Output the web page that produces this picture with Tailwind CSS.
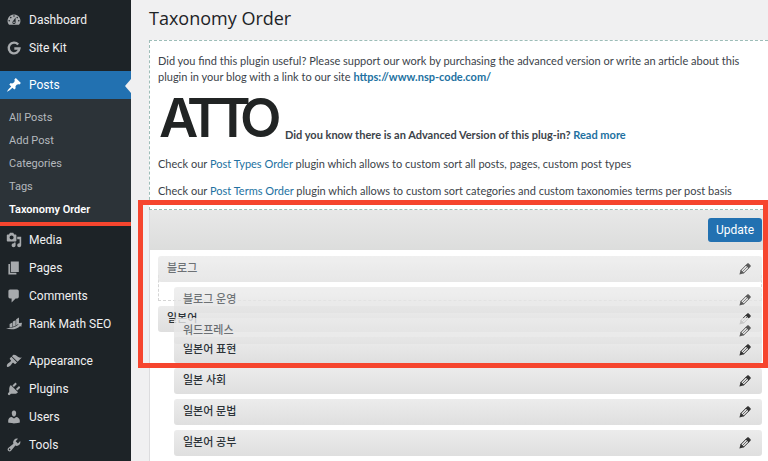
<!DOCTYPE html>
<html lang="en">
<head>
    <meta charset="UTF-8">
    <meta name="viewport" content="width=device-width, initial-scale=1.0">
    <title>Taxonomy Order</title>
    <script src="https://cdn.jsdelivr.net/npm/@tailwindcss/browser@4"></script>
</head>
<body class="flex min-h-screen overflow-x-hidden bg-[#f0f0f1] font-['Roboto','Noto_Sans_CJK_KR',sans-serif] text-[#3c434a]">

    <!-- Admin menu -->
    <nav aria-label="Main menu" class="relative w-[131px] shrink-0 bg-[#1d2327] pt-1.5 text-xs text-[#f0f0f1]">
        <a href="#" class="flex h-7 items-center gap-[7px] pl-1.5">
            <svg class="size-4 fill-[#a7aaad]" viewBox="0 0 20 20" aria-hidden="true"><path d="M3.76 16h12.48A7.998 7.998 0 0 0 10 3a7.998 7.998 0 0 0-6.24 13zM10 4c.55 0 1 .45 1 1s-.45 1-1 1-1-.45-1-1 .45-1 1-1zM6 6c.55 0 1 .45 1 1s-.45 1-1 1-1-.45-1-1 .45-1 1-1zm8 0c.55 0 1 .45 1 1s-.45 1-1 1-1-.45-1-1 .45-1 1-1zm-5.37 5.55L12 7v6c0 1.1-.9 2-2 2s-2-.9-2-2c0-.57.24-1.08.63-1.45zM4 10c.55 0 1 .45 1 1s-.45 1-1 1-1-.45-1-1 .45-1 1-1zm12 0c.55 0 1 .45 1 1s-.45 1-1 1-1-.45-1-1 .45-1 1-1zm-5 3c0-.55-.45-1-1-1s-1 .45-1 1 .45 1 1 1 1-.45 1-1z"/></svg>
            Dashboard
        </a>
        <a href="#" class="flex h-7 items-center gap-[7px] pl-1.5">
            <svg class="size-4" viewBox="0 0 20 20" fill="none" stroke="#a7aaad" stroke-width="3" aria-hidden="true"><path d="M15.2 5.6A6.7 6.7 0 1 0 16.8 10.6H10.4"/></svg>
            Site Kit
        </a>
        <a href="#" aria-current="true" class="relative mt-[9px] flex h-7 items-center gap-[7px] bg-[#2271b1] pl-1.5 text-white">
            <svg class="size-4 fill-white" viewBox="0 0 20 20" aria-hidden="true"><path d="M10.44 3.02l1.82-1.82 6.36 6.35-1.83 1.82c-1.05-.68-2.48-.57-3.41.36l-.75.75c-.92.93-1.04 2.35-.35 3.41l-1.83 1.82-2.41-2.41-2.8 2.79c-.42.42-3.38 2.71-3.8 2.29s1.86-3.39 2.28-3.81l2.79-2.79L4.1 9.36l1.83-1.82c1.05.69 2.48.57 3.4-.36l.75-.75c.93-.92 1.05-2.35.36-3.41z"/></svg>
            Posts
            <svg class="absolute top-2 right-0 h-3.5 w-1.5 fill-[#f0f0f1]" viewBox="0 0 6 14" aria-hidden="true"><path d="M6 0v14L0 7z"/></svg>
        </a>
        <div class="relative bg-[#2c3338] pt-[7px] pb-[5px] pl-[9px] text-[11px] leading-[23px] text-[#b4b9be]">
            <a href="#" class="block">All Posts</a>
            <a href="#" class="block">Add Post</a>
            <a href="#" class="block">Categories</a>
            <a href="#" class="block">Tags</a>
            <a href="#" aria-current="page" class="block font-semibold text-white">Taxonomy Order</a>
            <span class="absolute inset-x-0 bottom-0 h-1 bg-[#f6452e]"></span>
        </div>
        <a href="#" class="flex h-7 items-center gap-[7px] pl-1.5">
            <svg class="size-4 fill-[#a7aaad]" viewBox="0 0 20 20" aria-hidden="true"><path d="M13 11V4c0-.55-.45-1-1-1h-1.67L9 1H5L3.67 3H2c-.55 0-1 .45-1 1v7c0 .55.45 1 1 1h10c.55 0 1-.45 1-1zM7 4.5c1.38 0 2.5 1.12 2.5 2.5S8.38 9.5 7 9.5 4.5 8.38 4.5 7 5.62 4.5 7 4.5zM14 6h5v10.5c0 1.38-1.12 2.5-2.5 2.5S14 17.88 14 16.5s1.12-2.5 2.5-2.5c.17 0 .34.02.5.05V9h-3V6zm-4 8.05V13h2v3.5c0 1.38-1.12 2.5-2.5 2.5S7 17.88 7 16.5 8.12 14 9.5 14c.17 0 .34.02.5.05z"/></svg>
            Media
        </a>
        <a href="#" class="flex h-7 items-center gap-[7px] pl-1.5">
            <svg class="size-4 fill-[#a7aaad]" viewBox="0 0 20 20" aria-hidden="true"><path d="M6 15V2h10v13H6zm-1 1h8v2H3V5h2v11z"/></svg>
            Pages
        </a>
        <a href="#" class="flex h-7 items-center gap-[7px] pl-1.5">
            <svg class="size-4 fill-[#a7aaad]" viewBox="0 0 20 20" aria-hidden="true"><path d="M5 2h9c1.1 0 2 .9 2 2v7c0 1.1-.9 2-2 2h-2l-5 5v-5H5c-1.1 0-2-.9-2-2V4c0-1.1.9-2 2-2z"/></svg>
            Comments
        </a>
        <a href="#" class="flex h-7 items-center gap-[7px] pl-1.5">
            <svg class="size-4 fill-[#a7aaad]" viewBox="0 0 20 20" aria-hidden="true"><path d="M4.500 10l3.500-1.800v5.600l-3.500.8zM8.600 7l3.500-1.800v7L8.600 13.500zM12.700 4l3.500-2v7.500l-3.500 2.300zM0 15c5 .5 11-.6 15.600-4.500L14.300 9.200l5.700-.9-1 5.300-1.300-1.200C13.500 16.700 6 18 0 15z"/></svg>
            Rank Math SEO
        </a>
        <a href="#" class="mt-[9px] flex h-7 items-center gap-[7px] pl-1.5">
            <svg class="size-4 fill-[#a7aaad]" viewBox="0 0 20 20" aria-hidden="true"><path d="M14.48 11.06L7.41 3.99l1.5-1.5c.5-.56 2.3-.47 3.51.32 1.21.8 1.43 1.28 2.91 2.1 1.18.64 2.45 1.26 4.45.85zm-.71.71L6.7 4.7 4.93 6.47c-.39.39-.39 1.02 0 1.41l1.06 1.06c.39.39.39 1.03 0 1.42-.6.6-1.43 1.11-2.21 1.69-.35.26-.7.53-1.01.84C1.43 14.23.4 16.08 1.4 17.07c.99 1 2.84-.03 4.18-1.36.31-.31.58-.66.85-1.02.57-.78 1.08-1.61 1.69-2.21.39-.39 1.02-.39 1.41 0l1.06 1.06c.39.39 1.02.39 1.41 0z"/></svg>
            Appearance
        </a>
        <a href="#" class="flex h-7 items-center gap-[7px] pl-1.5">
            <svg class="size-4 fill-[#a7aaad]" viewBox="0 0 20 20" aria-hidden="true"><path d="M13.11 4.36L9.87 7.6 8 5.73l3.24-3.24c.35-.34 1.05-.2 1.56.32.52.51.66 1.21.31 1.55zm-8 1.77l.91-1.12 9.01 9.01-1.19.84c-.71.71-2.63 1.16-3.82 1.16H6.14L4.9 17.26c-.59.59-1.54.59-2.12 0-.59-.58-.59-1.53 0-2.12l1.24-1.24v-3.88c0-1.13.4-3.19 1.09-3.89zm7.26 3.97l3.24-3.24c.34-.35 1.04-.21 1.55.31.52.51.66 1.21.31 1.55l-3.24 3.25z"/></svg>
            Plugins
        </a>
        <a href="#" class="flex h-7 items-center gap-[7px] pl-1.5">
            <svg class="size-4 fill-[#a7aaad]" viewBox="0 0 20 20" aria-hidden="true"><path d="M10 9.25c-2.27 0-2.73-3.44-2.73-3.44C7 4.02 7.82 2 9.97 2c2.16 0 2.98 2.02 2.71 3.81 0 0-.41 3.44-2.68 3.44zm0 2.57L12.72 10c2.39 0 4.52 2.33 4.52 4.53v2.49s-3.65 1.13-7.24 1.13c-3.65 0-7.24-1.13-7.24-1.13v-2.49c0-2.25 1.94-4.48 4.47-4.48z"/></svg>
            Users
        </a>
        <a href="#" class="flex h-7 items-center gap-[7px] pl-1.5">
            <svg class="size-4 fill-[#a7aaad]" viewBox="0 0 20 20" aria-hidden="true"><path d="M16.68 9.77c-1.34 1.34-3.3 1.67-4.95.99l-5.41 6.52c-.99.99-2.59.99-3.58 0s-.99-2.59 0-3.57l6.52-5.42c-.68-1.65-.35-3.61.99-4.95 1.28-1.28 3.12-1.62 4.72-1.06l-2.89 2.89 2.82 2.82 2.86-2.87c.53 1.58.18 3.39-1.08 4.65zM3.81 16.21c.4.39 1.04.39 1.43 0 .4-.4.4-1.04 0-1.43-.39-.4-1.03-.4-1.43 0-.39.39-.39 1.03 0 1.43z"/></svg>
            Tools
        </a>
    </nav>

    <!-- Shared pencil icon -->
    <svg class="hidden" aria-hidden="true">
        <symbol id="pencil" viewBox="0 0 12 12">
            <path d="M2 7.300L7.200 2 10 4.800 4.700 10z" fill="#e4e4e4" stroke="#333" stroke-width="1"/>
            <path d="M3.600 8.400L8.500 3.500" stroke="#666" stroke-width="1" fill="none"/>
            <path d="M6.500 2.300L8.300.5c.4-.4 1-.4 1.400 0l1.800 1.800c.4.4.4 1 0 1.400L9.700 5.500zM1.700 6.800L.4 11.600 5.200 10.300z" fill="#333"/>
        </symbol>
    </svg>

    <main class="flex min-w-0 flex-1 flex-col pl-[18px]">
        <h1 class="pt-1.5 pb-2.5 font-['Open_Sans',sans-serif] text-lg leading-6 text-[#1d2327]">Taxonomy Order</h1>

        <section class="flex flex-col gap-[11px] border-y border-l border-dashed border-[#9dbdb8] bg-white pt-3 pr-6 pb-2.5 pl-2 font-['Lato',sans-serif] text-[11px] leading-4">
            <p>Did you find this plugin useful? Please support our work by purchasing the advanced version or write an article about this plugin in your blog with a link to our site <a href="#" class="font-bold text-[#2271a1]">https://www.nsp-code.com/</a></p>
            <div class="flex items-end gap-1 pb-0.5 font-bold">
                <svg class="-mt-4 -mb-2 h-[71px] w-[123px] font-['Inter',sans-serif] font-semibold" viewBox="0 -16 123 71" fill="#212424" font-size="54" role="img" aria-label="ATTO">
                    <text x="1 29 57 82" y="41">ATTO</text>
                </svg>
                <p>Did you know there is an Advanced Version of this plug-in? <a href="#" class="text-[#2271a1]">Read more</a></p>
            </div>
            <p>Check our <a href="#" class="text-[#2271a1]">Post Types Order</a> plugin which allows to custom sort all posts, pages, custom post types</p>
            <p>Check our <a href="#" class="text-[#2271a1]">Post Terms Order</a> plugin which allows to custom sort categories and custom taxonomies terms per post basis</p>
        </section>

        <section class="relative flex-1 border-l border-[#dcdcde] bg-white">
            <div class="flex h-10 items-center justify-end bg-linear-to-b from-[#e8e8e8] to-[#dcdddc] pr-1.5">
                <button type="button" class="h-6 rounded-[3px] bg-[#2271b1] px-2 text-xs text-white">Update</button>
            </div>

            <div class="relative pt-[25px] pr-1.5 pl-2 text-[11px] font-medium text-[#2c3338]">
                <!-- Drop target left behind by the dragged term -->
                <div class="mb-[5px] h-[26px] border border-t-0 border-dashed border-[#d5d5d5]"></div>

                <ul class="flex flex-col gap-[5px]">
                    <li class="flex h-[26px] items-center justify-between rounded-[3px] bg-linear-to-b from-[#ececec] to-[#dfdfdf] pr-[11px] pl-[9px]">
                        일본어
                        <button type="button" aria-label="Edit 일본어"><svg class="size-3"><use href="#pencil"/></svg></button>
                    </li>
                    <li class="ml-4 flex h-[26px] items-center justify-between rounded-[3px] bg-linear-to-b from-[#ececec] to-[#dfdfdf] pr-[11px] pl-[9px]">
                        일본어 표현
                        <button type="button" aria-label="Edit 일본어 표현"><svg class="size-3"><use href="#pencil"/></svg></button>
                    </li>
                    <li class="ml-4 flex h-[26px] items-center justify-between rounded-[3px] bg-linear-to-b from-[#ececec] to-[#dfdfdf] pr-[11px] pl-[9px]">
                        일본 사회
                        <button type="button" aria-label="Edit 일본 사회"><svg class="size-3"><use href="#pencil"/></svg></button>
                    </li>
                    <li class="ml-4 flex h-[26px] items-center justify-between rounded-[3px] bg-linear-to-b from-[#ececec] to-[#dfdfdf] pr-[11px] pl-[9px]">
                        일본어 문법
                        <button type="button" aria-label="Edit 일본어 문법"><svg class="size-3"><use href="#pencil"/></svg></button>
                    </li>
                    <li class="ml-4 flex h-[26px] items-center justify-between rounded-[3px] bg-linear-to-b from-[#ececec] to-[#dfdfdf] pr-[11px] pl-[9px]">
                        일본어 공부
                        <button type="button" aria-label="Edit 일본어 공부"><svg class="size-3"><use href="#pencil"/></svg></button>
                    </li>
                </ul>

                <!-- Term and its children while being dragged -->
                <ul class="absolute top-1.5 right-1.5 left-2 flex flex-col gap-[5px] text-[#2c3338]/85 opacity-80">
                    <li class="flex h-[26px] items-center justify-between rounded-[3px] bg-linear-to-b from-[#ececec] to-[#e2e2e2] pr-[11px] pl-[9px]">
                        블로그
                        <button type="button" aria-label="Edit 블로그"><svg class="size-3"><use href="#pencil"/></svg></button>
                    </li>
                    <li class="ml-4 flex h-[26px] items-center justify-between rounded-[3px] bg-linear-to-b from-[#ececec] to-[#e2e2e2] pr-[11px] pl-[9px]">
                        블로그 운영
                        <button type="button" aria-label="Edit 블로그 운영"><svg class="size-3"><use href="#pencil"/></svg></button>
                    </li>
                    <li class="ml-4 flex h-[26px] items-center justify-between rounded-[3px] bg-linear-to-b from-[#ececec] to-[#e2e2e2] pr-[11px] pl-[9px]">
                        워드프레스
                        <button type="button" aria-label="Edit 워드프레스"><svg class="size-3"><use href="#pencil"/></svg></button>
                    </li>
                </ul>
            </div>

            <!-- Highlight frame -->
            <div class="pointer-events-none absolute -top-2.5 right-0 -left-3 h-[168px] border-[5px] border-[#f6452e]"></div>
        </section>
    </main>
</body>
</html>
